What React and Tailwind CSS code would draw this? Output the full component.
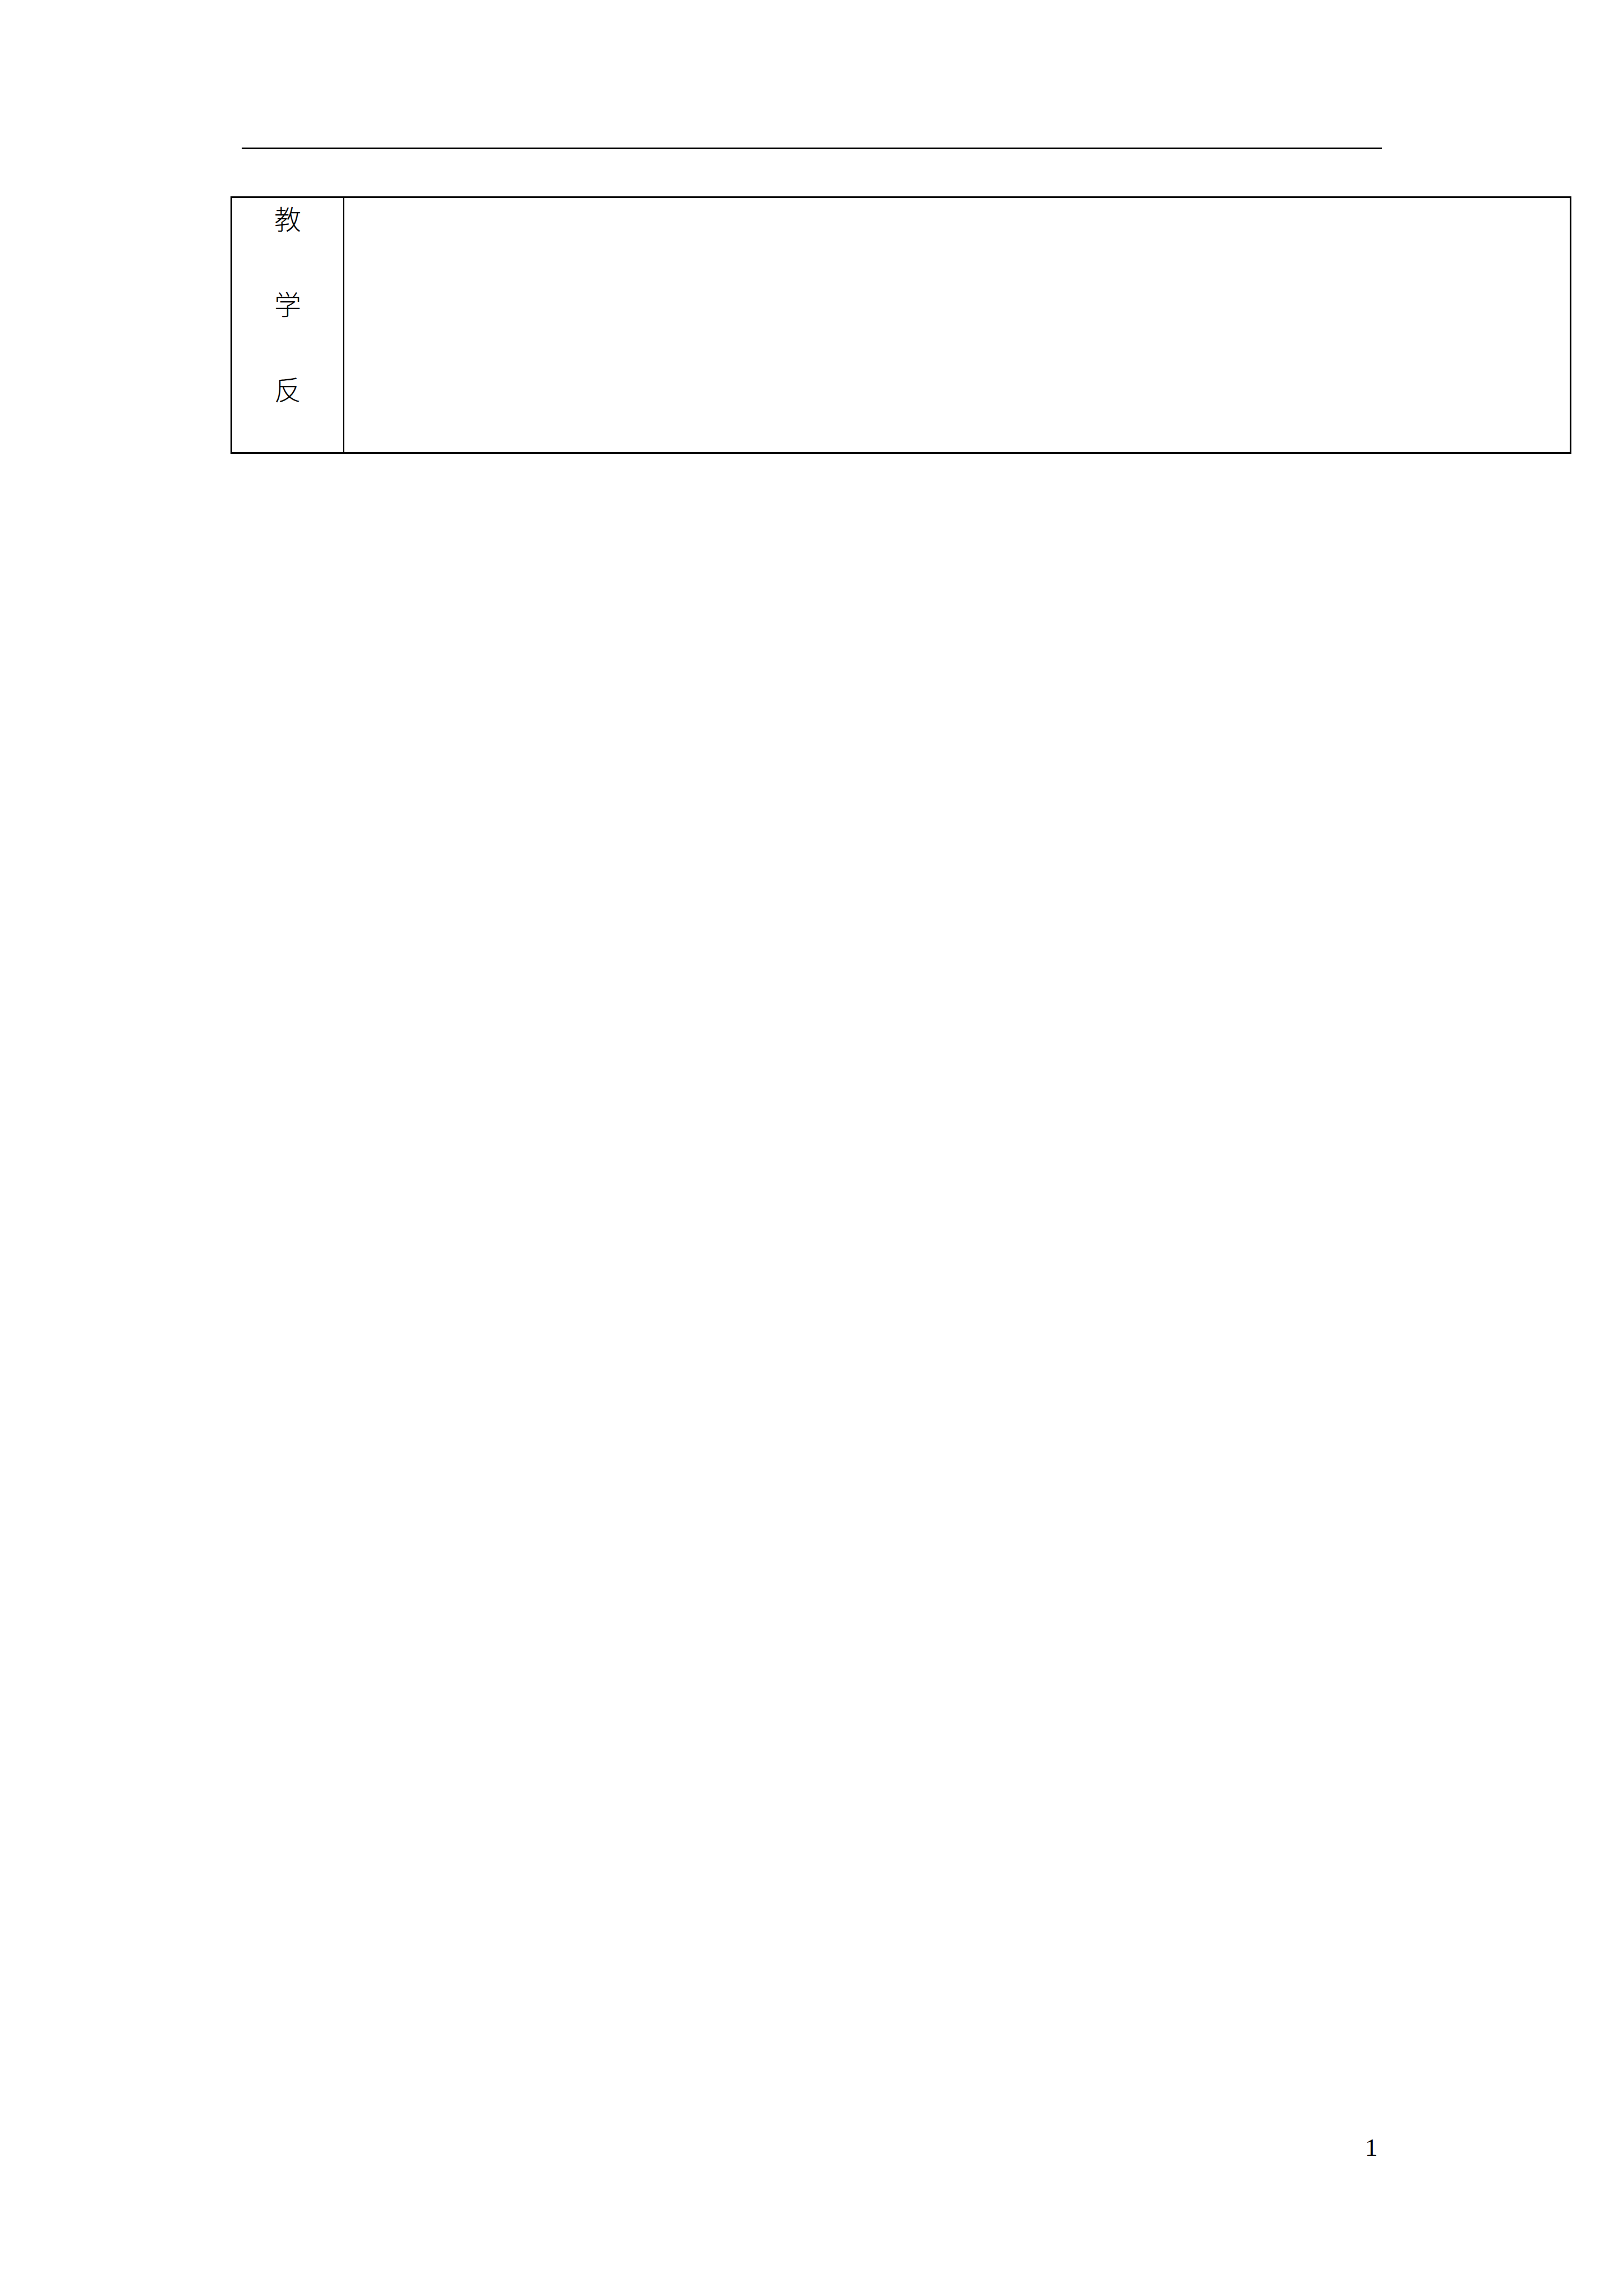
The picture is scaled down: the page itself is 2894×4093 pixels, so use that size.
export default function App() {
  return (
    <div className="w-[2894px] h-[4093px] bg-white relative" style={{ fontFamily: '"Liberation Serif", "Noto Sans CJK SC", serif' }}>
      <div className="pt-[263px]">
        <div className="ml-[431px] w-[2033px] h-[3px] bg-black" />
        <div className="ml-[411px] mt-[84px] w-[2391px] h-[459px] border-[3px] border-black flex">
          <div className="w-[200px] border-r-[2px] border-black flex flex-col items-center pt-[11px] gap-[104px]" style={{ fontFamily: '"Noto Sans CJK SC", sans-serif' }}>
            <div className="text-[48px] leading-[48px] font-light text-black">教</div>
            <div className="text-[48px] leading-[48px] font-light text-black">学</div>
            <div className="text-[48px] leading-[48px] font-light text-black">反</div>
          </div>
          <div className="flex-1" />
        </div>
        <div className="ml-[2434px] mt-[2997px] text-[45px] leading-[45px] text-black">1</div>
      </div>
    </div>
  );
}
